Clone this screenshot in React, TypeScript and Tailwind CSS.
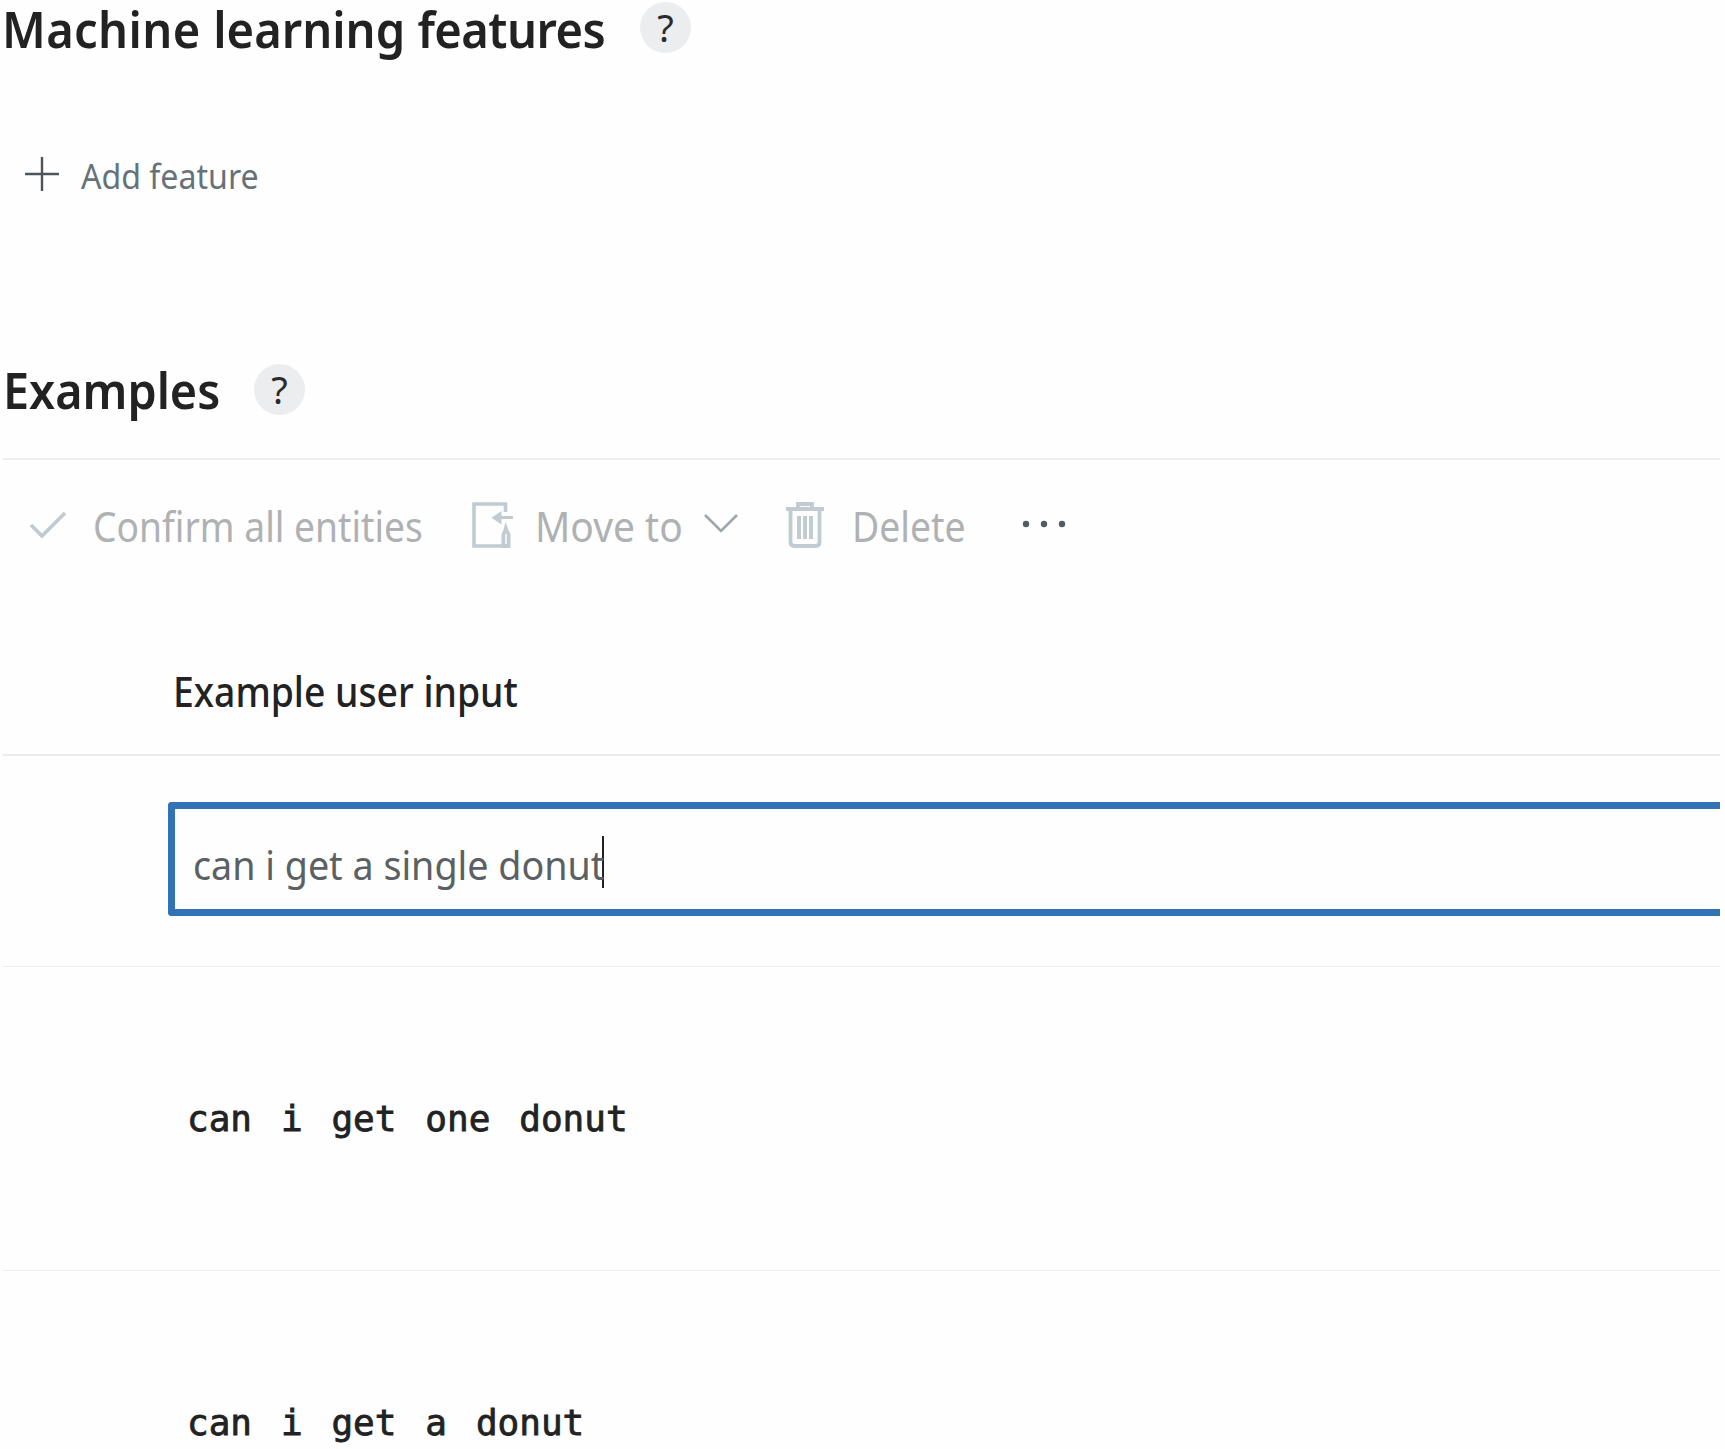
import { ReactNode } from "react";

function Help({ className = "" }: { className?: string }) {
  return (
    <span className={`flex size-[51px] shrink-0 items-center justify-center rounded-full bg-[#ecedef] text-[38px] leading-none text-[#2b2b2b] ${className}`}>
      ?
    </span>
  );
}

function Example({ children }: { children: ReactNode }) {
  return (
    <div className="mr-[5px] ml-[3px] flex h-[304px] shrink-0 items-center border-b border-[#efefef] pl-[184px] font-['DejaVu_Sans_Mono',monospace] text-[36px] whitespace-pre text-[#222] [word-spacing:7.2px] [-webkit-text-stroke:0.8px_#222]">
      {children}
    </div>
  );
}

export default function App() {
  return (
    <main className="flex h-[1449px] w-full flex-col overflow-hidden bg-[#fefefe] font-['Noto_Sans',sans-serif] text-[#222]">
      <header className="flex h-14 shrink-0 items-center">
        <div className="ml-[2px] w-[638px]">
          <h1 className="w-max origin-left scale-x-[0.924] text-[51px] leading-14 font-semibold">
            <span className="tracking-[0.4px]">Machine </span>
            <span>learning </span>
            <span className="tracking-[-0.6px]">features</span>
          </h1>
        </div>
        <Help className="-mt-[2px]" />
      </header>

      <button className="mt-[91px] ml-[25px] flex h-14 shrink-0 items-center text-[34px] text-[#66727a]">
        <svg className="-mt-[3px] mr-[22px] size-[34px]" viewBox="0 0 34 34" stroke="#4c555b" strokeWidth="2.4">
          <path d="M17 0v34M0 17h34" />
        </svg>
        <span className="mt-[2px] origin-left scale-x-[0.944]">Add feature</span>
      </button>

      <header className="mt-[158px] flex h-14 shrink-0 items-center">
        <div className="ml-[3px] w-[251px]">
          <h2 className="w-max origin-left scale-x-[0.916] text-[51px] leading-14 font-semibold">Examples</h2>
        </div>
        <Help />
      </header>

      <div className="mr-[5px] ml-[3px] mt-[41px] flex h-[132px] shrink-0 items-center border-t-2 border-[#eeeeee] text-[42px] whitespace-nowrap text-[#afb1b3]">
        <svg className="ml-[26px] h-[28px] w-[38px]" viewBox="0 0 38 28" fill="none" stroke="#bfcad1" strokeWidth="3.6">
          <path d="M2 14l11 11L36 2" />
        </svg>
        <div className="ml-[26px] w-[379px]">
          <span className="block w-max origin-left scale-x-[0.886]">Confirm all entities</span>
        </div>
        <svg className="h-[46px] w-[42px]" viewBox="0 0 42 46" fill="none" stroke="#c0cbd2" strokeWidth="3.6">
          <path d="M33.5 10V2H2v42h31" />
          <path d="M41 15.5H28" strokeWidth="3" />
          <path d="M29.5 9v13.500l-10-6.750z" fill="#c0cbd2" stroke="none" />
          <path d="M33.500 20l3 8 2 4v14h-9V32l2-4z" fill="#c0cbd2" stroke="none" />
          <path d="M34 32v10" stroke="#eef1f3" strokeWidth="2" />
        </svg>
        <div className="ml-[21px] w-[168px]">
          <span className="block w-max origin-left scale-x-[0.928]">Move to</span>
        </div>
        <svg className="-mt-[3px] h-[20px] w-[36px]" viewBox="0 0 36 20" fill="none" stroke="#9da6ab" strokeWidth="2.6">
          <path d="M2 1l16 16L34 1" />
        </svg>
        <svg className="ml-[46px] h-[48px] w-[40px]" viewBox="0 0 40 48" fill="none" stroke="#c0cbd2" strokeWidth="3.8">
          <path d="M1 8h38M13 7V3h14v4M5.500 8v33q0 4 4 4h21q4 0 4-4V8" />
          <path d="M14 15v23M20 15v23M26 15v23" strokeWidth="4" />
        </svg>
        <div className="ml-[27px] w-[170px]">
          <span className="block w-max origin-left scale-x-[0.890]">Delete</span>
        </div>
        <svg className="-mt-[3px] h-[8px] w-[46px]" viewBox="0 0 46 8" fill="#555b5f">
          <circle cx="4" cy="4" r="3.2" />
          <circle cx="22" cy="4" r="3.2" />
          <circle cx="40" cy="4" r="3.2" />
        </svg>
      </div>

      <div className="mr-[5px] ml-[3px] h-[166px] shrink-0 border-b-2 border-[#ececec] pt-[73px] pl-[170px]">
        <h3 className="w-max origin-left scale-x-[0.910] text-[41px] leading-14 font-medium">Example user input</h3>
      </div>

      <div className="mr-[5px] ml-[3px] h-[211px] shrink-0 border-b border-[#efefef] pt-[46px] pl-[165px]">
        <div className="flex h-[114px] items-center rounded-l-[4px] border-[7px] border-r-0 border-[#3173b6] pt-[9px] pl-[18px] text-[40px] whitespace-nowrap text-[#5b6063]">
          <div className="w-[409px]">
            <span className="mt-[2px] block w-max origin-left scale-x-[0.941]">can i get a single donut</span>
          </div>
          <span className="-mt-[4px] h-[52px] w-[2px] bg-[#222]" />
        </div>
      </div>

      <Example>can i get one donut</Example>
      <Example>can i get a donut</Example>
    </main>
  );
}
